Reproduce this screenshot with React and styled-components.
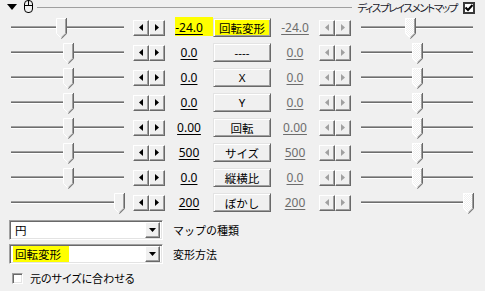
import React from 'react'
import styled, { createGlobalStyle } from 'styled-components'

const GlobalStyle = createGlobalStyle`
  html, body {
    margin: 0;
    padding: 0;
    background: #f0f0f0;
  }
  body {
    font-family: "Noto Sans", "Noto Sans CJK JP", sans-serif;
    font-size: 12px;
    color: #000;
  }
`

const rows = [
  { pos: 46, rpos: 45, value: '-24.0', label: '回転変形', mark: true },
  { pos: 53, rpos: 52, value: '0.0', label: '----' },
  { pos: 53, rpos: 52, value: '0.0', label: 'X' },
  { pos: 53, rpos: 52, value: '0.0', label: 'Y' },
  { pos: 53, rpos: 52, value: '0.00', label: '回転' },
  { pos: 53, rpos: 52, value: '500', label: 'サイズ' },
  { pos: 53, rpos: 52, value: '0.0', label: '縦横比' },
  { pos: 104, rpos: 103, value: '200', label: 'ぼかし' },
]

export default function App() {
  return (
    <>
      <GlobalStyle />
      <Panel>
        <Header>
          <svg width="10" height="7" viewBox="0 0 10 7">
            <polygon points="0,0 10,0 5,6" fill="#000" />
          </svg>
          <MouseIcon width="10" height="14" viewBox="0 0 10 14">
            <rect x="0.5" y="0.5" width="8" height="12" rx="3.5" fill="none" stroke="#000" />
            <line x1="0.5" y1="5.5" x2="8.5" y2="5.5" stroke="#000" />
            <line x1="4.5" y1="0.5" x2="4.5" y2="5.5" stroke="#000" />
          </MouseIcon>
          <HeaderLine />
          <HeaderTitle>ディスプレイスメントマップ</HeaderTitle>
          <HeaderCheck>
            <svg width="8" height="8" viewBox="0 0 8 8">
              <polyline points="0.5,3.5 3,6 7.5,1" fill="none" stroke="#000" strokeWidth="2" />
            </svg>
          </HeaderCheck>
        </Header>

        {rows.map((r, i) => (
          <Row key={i}>
            <Slider>
              <Track />
              <Thumb pos={r.pos} />
            </Slider>
            <Spin />
            <Value $mark={r.mark}>
              <span>{r.value}</span>
            </Value>
            <ParamButton $mark={r.mark}>{r.label}</ParamButton>
            <Value $dim>
              <span>{r.value}</span>
            </Value>
            <Spin dim />
            <RightSlider>
              <Track />
              <Thumb pos={r.rpos} hatched />
            </RightSlider>
          </Row>
        ))}

        <Options>
          <ComboRow>
            <Combo>
              <ComboText>円</ComboText>
              <DropButton>
                <svg width="7" height="4" viewBox="0 0 7 4">
                  <polygon points="0,0 7,0 3.5,4" fill="#000" />
                </svg>
              </DropButton>
            </Combo>
            <ComboLabel>マップの種類</ComboLabel>
          </ComboRow>
          <ComboRow>
            <Combo>
              <ComboText>
                <Marker>回転変形</Marker>
              </ComboText>
              <DropButton>
                <svg width="7" height="4" viewBox="0 0 7 4">
                  <polygon points="0,0 7,0 3.5,4" fill="#000" />
                </svg>
              </DropButton>
            </Combo>
            <ComboLabel>変形方法</ComboLabel>
          </ComboRow>
          <CheckRow>
            <CheckBox />
            <CheckLabel>元のサイズに合わせる</CheckLabel>
          </CheckRow>
        </Options>
      </Panel>
    </>
  )
}

function Spin({ dim }) {
  const c = dim ? '#a0a0a0' : '#000'
  return (
    <SpinGroup>
      <SpinButton>
        <svg width="4" height="7" viewBox="0 0 4 7">
          <polygon points="4,0 4,7 0,3.5" fill={c} />
        </svg>
      </SpinButton>
      <SpinButton>
        <svg width="4" height="7" viewBox="0 0 4 7">
          <polygon points="0,0 0,7 4,3.5" fill={c} />
        </svg>
      </SpinButton>
    </SpinGroup>
  )
}

function Thumb({ pos, hatched }) {
  const id = hatched ? 'hatch' : undefined
  return (
    <ThumbSvg width="11" height="21" viewBox="0 0 11 21" style={{ left: pos }}>
      {hatched && (
        <defs>
          <pattern id="hatch" width="2" height="2" patternUnits="userSpaceOnUse">
            <rect width="2" height="2" fill="#f0f0f0" />
            <rect width="1" height="1" fill="#ffffff" />
            <rect x="1" y="1" width="1" height="1" fill="#ffffff" />
          </pattern>
        </defs>
      )}
      <polygon points="0,0 11,0 11,15 5.5,20.5 0,15" fill={id ? 'url(#hatch)' : '#f0f0f0'} />
      <polyline points="0.5,15.5 0.5,0.5 9.5,0.5" fill="none" stroke="#fff" />
      <line x1="0.5" y1="15.5" x2="5" y2="20" stroke="#fff" />
      <polyline points="9.5,1 9.5,15.3 5.3,19.5" fill="none" stroke="#a0a0a0" />
      <polyline points="10.5,0 10.5,15.7 5.5,20.7" fill="none" stroke="#696969" />
    </ThumbSvg>
  )
}

const Panel = styled.div`
  width: 485px;
  height: 291px;
  overflow: hidden;
  background: #f0f0f0;
`

const Header = styled.div`
  display: flex;
  align-items: center;
  height: 15px;
  padding-left: 7px;
  padding-right: 10px;
`

const MouseIcon = styled.svg`
  margin-left: 7px;
  margin-top: -1px;
`

const HeaderLine = styled.div`
  flex: 1;
  height: 1px;
  margin: 0 5px 0 3px;
  background: #a0a0a0;
`

const HeaderTitle = styled.span`
  font-family: "Noto Sans CJK JP", sans-serif;
  font-size: 10.5px;
  font-feature-settings: "palt";
  letter-spacing: -1.4px;
  color: #1a1a2a;
  line-height: 14px;
`

const HeaderCheck = styled.div`
  display: flex;
  align-items: center;
  justify-content: center;
  width: 12px;
  height: 12px;
  margin-left: 6px;
  box-sizing: border-box;
  border: 2px solid #3a3a3a;
  background: #fff;
`

const Row = styled.div`
  display: flex;
  align-items: center;
  height: 25px;
`

const Slider = styled.div`
  position: relative;
  display: flex;
  align-items: center;
  width: 115px;
  height: 25px;
  margin-left: 10px;
  margin-right: 8px;
`

const RightSlider = styled(Slider)`
  width: 114px;
  margin-left: 9px;
  margin-right: 0;
`

const Track = styled.div`
  flex: 1;
  margin: 0 1px;
  height: 1px;
  border-top: 1px solid #a0a0a0;
  border-bottom: 1px solid #fff;
  background: #6e6e6e;
`

const ThumbSvg = styled.svg`
  position: absolute;
  top: 3px;
`

const SpinGroup = styled.div`
  display: flex;
`

const SpinButton = styled.div`
  display: flex;
  align-items: center;
  justify-content: center;
  width: 16px;
  height: 16px;
  box-sizing: border-box;
  background: #f0f0f0;
  border-top: 1px solid #fff;
  border-left: 1px solid #fff;
  border-right: 1px solid #696969;
  border-bottom: 1px solid #696969;
  box-shadow: inset -1px -1px 0 #a0a0a0;
`

const Value = styled.div`
  position: relative;
  width: 48px;
  text-align: center;
  font-size: 12px;
  line-height: 16px;
  color: ${p => (p.$dim ? '#6d6d6d' : '#000')};

  span {
    position: relative;
    text-decoration: underline;
    text-underline-offset: 2px;
  }

  &::before {
    content: '';
    display: ${p => (p.$mark ? 'block' : 'none')};
    position: absolute;
    left: 10px;
    right: 0;
    top: -3px;
    height: 19px;
    background: #ffff00;
  }
`

const ParamButton = styled.div`
  display: flex;
  align-items: center;
  justify-content: center;
  width: 58px;
  height: 19px;
  box-sizing: border-box;
  background: ${p => (p.$mark ? '#ffff00' : '#f0f0f0')};
  border-top: 1px solid #e3e3e3;
  border-left: 1px solid #e3e3e3;
  border-right: 1px solid #696969;
  border-bottom: 1px solid #696969;
  box-shadow: inset 1px 1px 0 #fff, inset -1px -1px 0 #a0a0a0;
  font-family: "Noto Sans", "Noto Sans CJK JP", sans-serif;
  font-size: 11.5px;
`

const Options = styled.div`
  display: flex;
  flex-direction: column;
  padding: 5px 0 0 9px;
`

const ComboRow = styled.div`
  display: flex;
  align-items: center;
  height: 20px;
  margin-bottom: 4px;
`

const Combo = styled.div`
  display: flex;
  align-items: center;
  width: 154px;
  height: 20px;
  box-sizing: border-box;
  background: #fff;
  border-top: 1px solid #a0a0a0;
  border-left: 1px solid #a0a0a0;
  border-right: 1px solid #fff;
  border-bottom: 1px solid #fff;
  box-shadow: inset 1px 1px 0 #696969, inset -1px -1px 0 #e3e3e3;
  padding: 2px;
`

const ComboText = styled.div`
  flex: 1;
  padding-left: 3px;
  font-family: "Noto Sans CJK JP", sans-serif;
  font-size: 11.5px;
  line-height: 16px;
`

const Marker = styled.span`
  display: inline-block;
  margin-left: -2px;
  padding: 0 8px 0 2px;
  background: #ffff00;
`

const DropButton = styled(SpinButton)`
  width: 15px;
  height: 16px;
`

const ComboLabel = styled.span`
  margin-left: 10px;
  font-family: "Noto Sans CJK JP", sans-serif;
  font-size: 11px;
`

const CheckRow = styled.div`
  display: flex;
  align-items: center;
  height: 16px;
  margin-top: 2px;
  padding-left: 3px;
`

const CheckBox = styled.div`
  width: 11px;
  height: 11px;
  box-sizing: border-box;
  background: #fff;
  border-top: 1px solid #a0a0a0;
  border-left: 1px solid #a0a0a0;
  border-right: 1px solid #fff;
  border-bottom: 1px solid #fff;
  box-shadow: inset 1px 1px 0 #696969, inset -1px -1px 0 #e3e3e3;
`

const CheckLabel = styled.span`
  margin-left: 7px;
  font-family: "Noto Sans CJK JP", sans-serif;
  font-size: 11px;
  font-feature-settings: "palt";
`
